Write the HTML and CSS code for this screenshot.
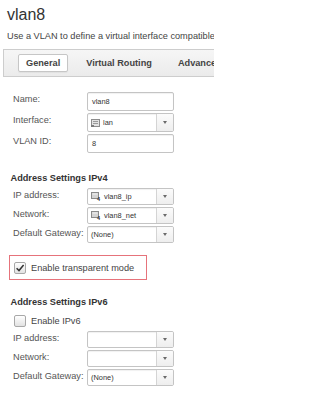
FILE: index.html
```html
<!DOCTYPE html>
<html>
<head>
<meta charset="utf-8">
<link rel="stylesheet" href="styles.css">
</head>
<body>
<div class="page">
  <h1 class="title">vlan8</h1>
  <p class="desc">Use a VLAN to define a virtual interface compatible with VLAN tagging.</p>
  <div class="tabs">
    <span class="tab active">General</span>
    <span class="tab">Virtual Routing</span>
    <span class="tab">Advanced</span>
  </div>

  <div class="form g1">
    <div class="lbl">Name:</div>
    <div class="ctl"><span class="val">vlan8</span></div>
    <div class="lbl">Interface:</div>
    <div class="ctl">
      <span class="val icon">
        <svg class="ico" width="9" height="8" viewBox="0 0 9 8"><rect x="0.5" y="0.5" width="8" height="7" fill="#e2e2e2" stroke="#8c8c8c"/><rect x="2" y="2" width="5" height="1" fill="#9a9a9a"/><rect x="2" y="4" width="5" height="1" fill="#9a9a9a"/><rect x="0" y="6" width="3" height="2" fill="#7a7a7a"/></svg>
        lan
      </span>
      <span class="btn"><span class="arrow"></span></span>
    </div>
    <div class="lbl">VLAN ID:</div>
    <div class="ctl"><span class="val">8</span></div>
  </div>

  <div class="hd hd4">Address Settings IPv4</div>
  <div class="form g2">
    <div class="lbl">IP address:</div>
    <div class="ctl">
      <span class="val icon">
        <svg class="ico" width="10" height="9" viewBox="0 0 10 9"><rect x="0.5" y="0.5" width="7" height="6" fill="#d4d4d4" stroke="#8a8a8a"/><rect x="1.5" y="1.5" width="5" height="1" fill="#f2f2f2"/><text x="6" y="9" font-size="5.5" font-weight="bold" font-family="Liberation Sans, sans-serif" fill="#333">4</text></svg>
        vlan8_ip
      </span>
      <span class="btn"><span class="arrow"></span></span>
    </div>
    <div class="lbl">Network:</div>
    <div class="ctl">
      <span class="val icon">
        <svg class="ico" width="10" height="9" viewBox="0 0 10 9"><rect x="0.5" y="0.5" width="7" height="6" fill="#d4d4d4" stroke="#8a8a8a"/><rect x="1.5" y="1.5" width="5" height="1" fill="#f2f2f2"/><text x="6" y="9" font-size="5.5" font-weight="bold" font-family="Liberation Sans, sans-serif" fill="#333">4</text></svg>
        vlan8_net
      </span>
      <span class="btn"><span class="arrow"></span></span>
    </div>
    <div class="lbl">Default Gateway:</div>
    <div class="ctl">
      <span class="val none">(None)</span>
      <span class="btn"><span class="arrow"></span></span>
    </div>
  </div>

  <div class="tbox">
    <span class="cb"><svg width="10" height="10" viewBox="0 0 10 10"><path d="M1.6 5.2 L4 7.6 L8.6 2" fill="none" stroke="#333" stroke-width="1.5"/></svg></span>
    <span class="cbl">Enable transparent mode</span>
  </div>

  <div class="hd hd6">Address Settings IPv6</div>
  <div class="row6">
    <span class="cb"></span>
    <span class="cbl">Enable IPv6</span>
  </div>
  <div class="form g3">
    <div class="lbl">IP address:</div>
    <div class="ctl">
      <span class="val"></span>
      <span class="btn"><span class="arrow"></span></span>
    </div>
    <div class="lbl">Network:</div>
    <div class="ctl">
      <span class="val"></span>
      <span class="btn"><span class="arrow"></span></span>
    </div>
    <div class="lbl">Default Gateway:</div>
    <div class="ctl">
      <span class="val none">(None)</span>
      <span class="btn"><span class="arrow"></span></span>
    </div>
  </div>
</div>
</body>
</html>
```

FILE: styles.css
```css
html, body {
  margin: 0;
  padding: 0;
}
body {
  font-family: "Liberation Sans", Arial, sans-serif;
  font-size: 9.2px;
  color: #555;
  background: #fff;
  width: 214px;
  height: 400px;
  overflow: hidden;
}
.page {
  width: 214px;
  overflow: hidden;
}
.title {
  margin: 0;
  padding: 5px 0 0 7px;
  font-size: 16px;
  line-height: 20px;
  font-weight: normal;
  color: #333;
}
.desc {
  margin: 5px 0 0 7px;
  line-height: 12px;
  white-space: nowrap;
  color: #444;
}
.tabs {
  margin: 7px 0 0 3px;
  height: 28px;
  box-sizing: border-box;
  border: 1px solid #cdcdcd;
  border-right: none;
  background: linear-gradient(#f6f6f6, #ebebeb);
  display: flex;
  align-items: center;
  padding-left: 14px;
  gap: 10px;
  white-space: nowrap;
}
.tab {
  flex: none;
  height: 18px;
  box-sizing: border-box;
  padding: 0 7px;
  border: 1px solid transparent;
  border-radius: 2px;
  font-weight: bold;
  color: #444;
  line-height: 16px;
}
.tab.active {
  background: #fff;
  border-color: #c6c6c6;
  box-shadow: 0 1px 1px rgba(0,0,0,0.05);
}
.form {
  display: grid;
  grid-template-columns: 74px 87px;
  row-gap: 2px;
  margin-left: 13px;
}
.g1 {
  margin-top: 15px;
  grid-auto-rows: 19px;
}
.g2, .g3 {
  margin-top: 4px;
  grid-auto-rows: 17px;
}
.lbl {
  line-height: 11px;
  padding-top: 1.5px;
  white-space: nowrap;
  color: #555;
}
.ctl {
  box-sizing: border-box;
  border: 1px solid #c4c4c4;
  border-radius: 2px;
  background: #fff;
  display: flex;
  align-items: center;
  font-size: 7.4px;
  color: #333;
  box-shadow: inset 0 1px 1px rgba(0,0,0,0.06);
  overflow: hidden;
}
.val {
  flex: 1;
  padding-left: 4px;
  display: flex;
  align-items: center;
  white-space: nowrap;
  overflow: hidden;
}
.val.icon {
  padding-left: 3px;
  gap: 3px;
}
.val.none {
  padding-left: 3px;
}
.ico {
  flex: none;
  display: block;
}
.btn {
  flex: none;
  width: 16px;
  align-self: stretch;
  border-left: 1px solid #d4d4d4;
  background: linear-gradient(#fbfbfb, #eeeeee);
  display: flex;
  align-items: center;
  justify-content: center;
}
.arrow {
  width: 0;
  height: 0;
  border-left: 2.5px solid transparent;
  border-right: 2.5px solid transparent;
  border-top: 3px solid #6a6a6a;
}
.hd {
  font-weight: bold;
  color: #333;
  line-height: 12px;
  margin-left: 10.5px;
}
.hd4 {
  margin-top: 19px;
}
.hd6 {
  margin-top: 15.5px;
}
.tbox {
  margin: 12px 0 0 9px;
  width: 138px;
  height: 25px;
  box-sizing: border-box;
  border: 1px solid #e6737b;
  display: flex;
  align-items: center;
  padding-left: 4px;
  gap: 5px;
}
.cb {
  flex: none;
  width: 12px;
  height: 12px;
  box-sizing: border-box;
  border: 1px solid #a8a8a8;
  border-radius: 2px;
  background: linear-gradient(#ffffff, #e2e2e2);
  display: flex;
  align-items: center;
  justify-content: center;
}
.cbl {
  line-height: 12px;
  color: #444;
  white-space: nowrap;
}
.row6 {
  margin: 7.5px 0 0 14px;
  display: flex;
  align-items: center;
  gap: 5px;
  height: 12px;
}
```
